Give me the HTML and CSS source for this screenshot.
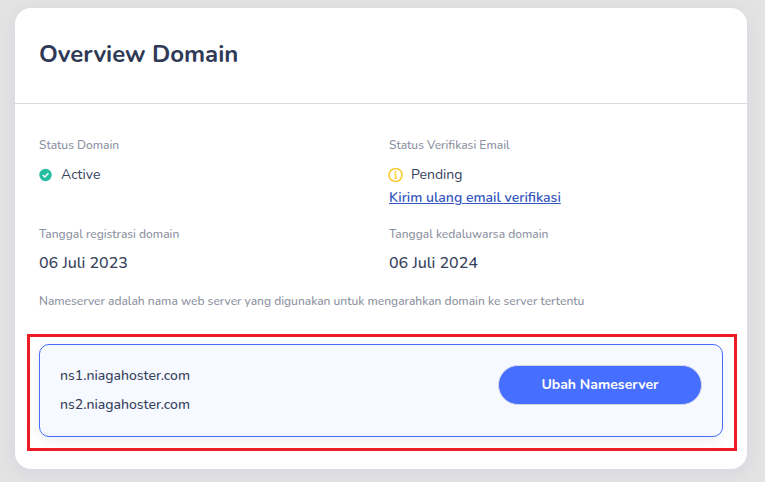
FILE: index.html
```html
<!DOCTYPE html>
<html lang="id">
<head>
<meta charset="utf-8">
<meta name="viewport" content="width=device-width, initial-scale=1">
<title>Overview Domain</title>
<link rel="stylesheet" href="styles.css">
</head>
<body>
<main class="card">
  <header class="card-header">
    <h1>Overview Domain</h1>
  </header>
  <dl class="details">
    <div>
      <dt>Status Domain</dt>
      <dd class="status">
        <svg class="icon" viewBox="0 0 14 14" aria-hidden="true"><circle cx="6.5" cy="7" r="6.2" fill="#25bea3"/><path d="M3.8 7.1 5.8 9 9.4 5.3" fill="none" stroke="#fff" stroke-width="1.4"/></svg>
        Active
      </dd>
    </div>
    <div>
      <dt>Status Verifikasi Email</dt>
      <dd class="status">
        <svg class="icon" viewBox="0 0 14 14" aria-hidden="true"><circle cx="6.5" cy="7" r="6.5" fill="none" stroke="#f9cc32" stroke-width="1.6"/><circle cx="6.5" cy="4.2" r="1" fill="#f9cc32"/><path d="M5.2 6.4H6.7V10.1M5.1 10.1H8.2" fill="none" stroke="#f9cc32" stroke-width="1.3"/></svg>
        Pending
      </dd>
      <dd class="action"><a href="#kirim-ulang">Kirim ulang email verifikasi</a></dd>
    </div>
    <div>
      <dt>Tanggal registrasi domain</dt>
      <dd class="date">06 Juli 2023</dd>
    </div>
    <div>
      <dt>Tanggal kedaluwarsa domain</dt>
      <dd class="date">06 Juli 2024</dd>
    </div>
  </dl>
  <p class="note">Nameserver adalah nama web server yang digunakan untuk mengarahkan domain ke server tertentu</p>
  <div class="highlight">
    <section class="nameservers" aria-label="Nameserver">
      <ul>
        <li>ns1.niagahoster.com</li>
        <li>ns2.niagahoster.com</li>
      </ul>
      <button type="button">Ubah Nameserver</button>
    </section>
  </div>
</main>
</body>
</html>
```
FILE: styles.css
```css
* { box-sizing: border-box; }

body {
  margin: 0;
  padding: 8px 18px 13px 15px;
  background: #e3e3e3;
  color: #36415c;
  font: 14px/24px Nunito, Lato, sans-serif;
}

h1, dl, dd, p, ul { margin: 0; padding: 0; }

.card {
  padding-bottom: 18px;
  background: #fff;
  border-radius: 16px;
  box-shadow: 0 4px 16px rgba(190, 196, 214, 0.4);
}

.card-header {
  padding: 30px 24px 33px;
  border-bottom: 1px solid #dadce0;
}

h1 {
  color: #2f3a56;
  font-size: 24px;
  font-weight: 700;
  line-height: 32px;
}

.details {
  display: grid;
  grid-template-columns: 1fr 1fr;
  gap: 17px 16px;
  padding: 33px 24px 18px;
}

dt, .note {
  color: #8b91a0;
  font-size: 12px;
  font-weight: 500;
  line-height: 16px;
}

dt { margin-bottom: 9px; }

.status {
  display: flex;
  align-items: center;
  gap: 8px;
  padding-top: 1px;
}

.action { line-height: 22px; }

.icon {
  width: 14px;
  height: 14px;
  overflow: visible;
}

.date {
  font-size: 16px;
  font-weight: 500;
}

a {
  color: #3557bd;
  font-weight: 600;
}

.note { padding: 0 24px; }

/* Callout frame around the nameserver panel */
.highlight {
  margin: 25px 10px 0 12px;
  padding: 7px 11px 11px 9px;
  border: 3px solid #ed1c24;
}

.nameservers {
  display: flex;
  justify-content: space-between;
  align-items: flex-start;
  padding: 20px;
  background: #f6f9ff;
  border: 1px solid #446dfa;
  border-radius: 10px;
  box-shadow: 0 4px 12px rgba(190, 196, 214, 0.25);
}

ul {
  list-style: none;
  display: grid;
  gap: 7px;
  font-weight: 500;
  line-height: 22px;
}

button {
  min-width: 204px;
  height: 40px;
  padding: 0 24px;
  background: #466eff;
  color: #fff;
  border: 1px solid #cfd6e8;
  border-radius: 20px;
  font: 700 14px/20px Nunito, Lato, sans-serif;
}
```
